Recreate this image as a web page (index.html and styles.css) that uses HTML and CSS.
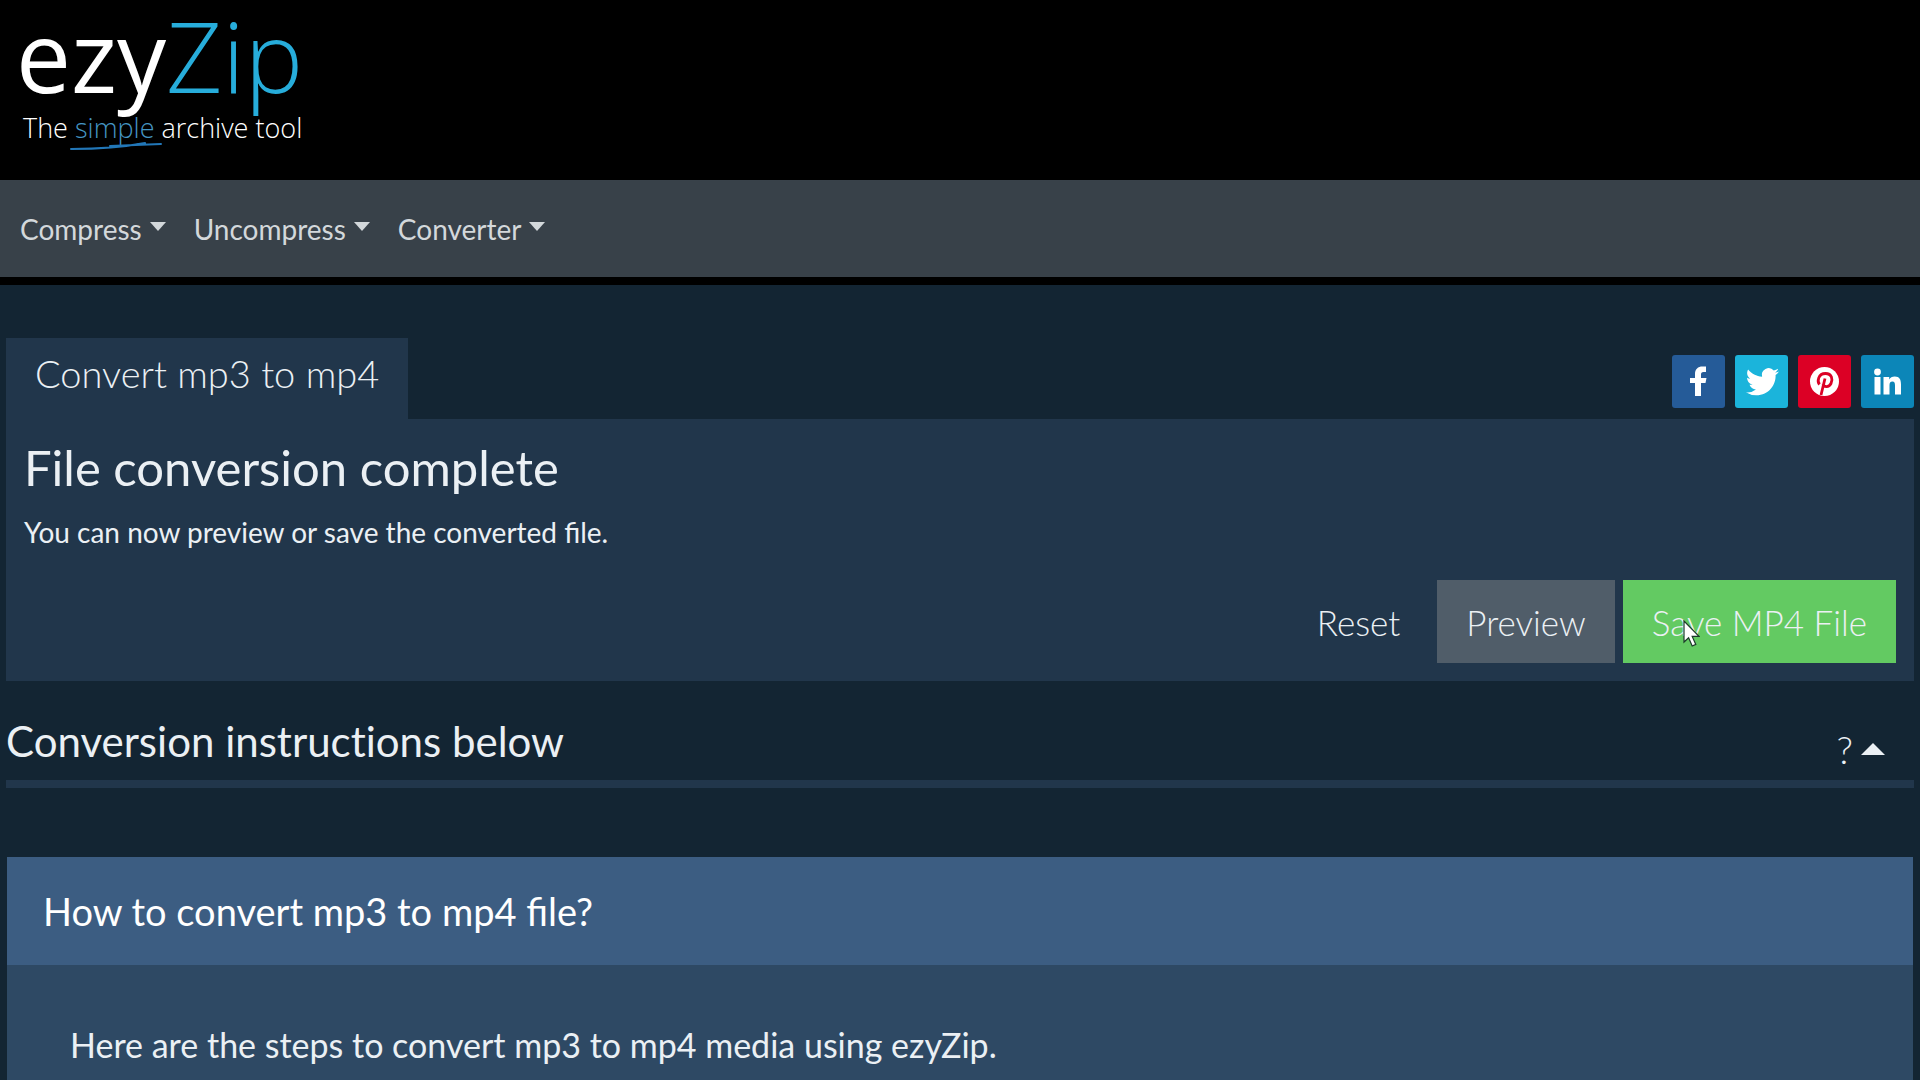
FILE: index.html
```html
<!DOCTYPE html>
<html lang="en">
<head>
<meta charset="utf-8">
<title>Convert mp3 to mp4 - ezyZip</title>
<link rel="stylesheet" href="styles.css">
</head>
<body>
<header class="site-header">
  <a class="logo" href="#">
    <span class="logo-name">ezy<span class="logo-zip">Zip</span></span>
    <span class="logo-tagline">The <span class="logo-simple">simple<svg class="logo-stroke" viewBox="0 0 92 10" aria-hidden="true"><path d="M1 8 C30 8 54 6 75 2 M40 5 L91 3" fill="none" stroke="#2277b8" stroke-width="2" stroke-linecap="round"/></svg></span> archive tool</span>
  </a>
</header>

<nav class="navbar">
  <button class="nav-item" type="button">Compress<span class="caret"></span></button>
  <button class="nav-item" type="button">Uncompress<span class="caret"></span></button>
  <button class="nav-item" type="button">Converter<span class="caret"></span></button>
</nav>

<main class="content">
  <div class="tab-row">
    <a class="tab" href="#">Convert mp3 to mp4</a>
    <div class="social">
      <a class="share facebook" href="#" aria-label="Facebook">
        <svg viewBox="0 0 53 53"><path d="M23 41V28h-5v-5h5v-4c0-5 3-7.500 7.500-7.500H34v5.500h-2.500c-2 0-2.500 1-2.500 2.500V23h5.500l-1 5H29v13z" fill="#fff"/></svg>
      </a>
      <a class="share twitter" href="#" aria-label="Twitter">
        <svg viewBox="0 0 53 53"><path d="M44 16.500c-1.200.5-2.500.9-3.900 1.100 1.400-.8 2.500-2.200 3-3.800-1.300.8-2.800 1.400-4.300 1.700a6.800 6.800 0 0 0-11.700 6.200c-5.700-.3-10.700-3-14-7.100-1.800 3.100-.9 7.100 2.100 9.100-1.100 0-2.200-.3-3.100-.9 0 3.200 2.300 6.200 5.500 6.800-1 .3-2 .3-3.100.1.900 2.700 3.400 4.700 6.400 4.700a13.700 13.700 0 0 1-10.100 2.900A19.400 19.400 0 0 0 21.300 40.300c12.600 0 19.700-10.600 19.300-20.300 1.300-1 2.500-2.100 3.400-3.500z" fill="#fff"/></svg>
      </a>
      <a class="share pinterest" href="#" aria-label="Pinterest">
        <svg viewBox="0 0 53 53"><circle cx="26.500" cy="26.500" r="14.500" fill="#fff"/><path d="M21.500 29.500c-2.500-3-1.500-11 6-11 6.500 0 7.500 6 5.500 10s-7 4-8 .5M27 23.500L23 40" fill="none" stroke="#dc0025" stroke-width="2.800"/></svg>
      </a>
      <a class="share linkedin" href="#" aria-label="LinkedIn">
        <svg viewBox="0 0 53 53"><circle cx="16.500" cy="17" r="3.400" fill="#fff"/><path d="M13.500 22h6v17.500h-6zM22.500 22h5.700v2.500c1-1.700 2.800-3 5.600-3 4.800 0 6.200 3.200 6.200 8v10h-6v-9c0-2.500-.5-4-2.600-4-2.200 0-2.900 1.600-2.900 4v9h-6z" fill="#fff"/></svg>
      </a>
    </div>
  </div>

  <section class="panel">
    <h1 class="panel-title">File conversion complete</h1>
    <p class="panel-text">You can now preview or save the converted file.</p>
    <div class="actions">
      <button class="btn btn-link" type="button">Reset</button>
      <button class="btn btn-grey" type="button">Preview</button>
      <button class="btn btn-green" type="button">Save MP4 File
        <svg class="pointer" viewBox="0 0 17 27" aria-hidden="true"><path d="M1 1v21l4.600-4.300 3.600 8.300 3.600-1.600-3.600-8H16z" fill="#fff" stroke="#1c3a2a" stroke-width="1.200"/></svg>
      </button>
    </div>
  </section>

  <div class="instructions">
    <h2 class="instructions-title">Conversion instructions below</h2>
    <button class="help" type="button" aria-label="Toggle instructions">?<span class="caret-up"></span></button>
  </div>

  <section class="card">
    <h3 class="card-header">How to convert mp3 to mp4 file?</h3>
    <p class="card-body">Here are the steps to convert mp3 to mp4 media using ezyZip.</p>
  </section>
</main>
</body>
</html>
```

FILE: styles.css
```css
* {
  box-sizing: border-box;
}
body {
  margin: 0;
  min-height: 100vh;
  display: flex;
  flex-direction: column;
  font-family: Lato, "Liberation Sans", sans-serif;
  font-size: 28px;
  color: #ebf0f4;
  background-color: #132533;
}
h1, h2, h3, p {
  margin: 0;
  font-weight: 400;
}
a {
  color: inherit;
  text-decoration: none;
}
button {
  border: none;
  padding: 0;
  background: none;
  color: inherit;
  font: inherit;
  cursor: pointer;
}

/* Header */
.site-header {
  height: 180px;
  padding: 7px 16px;
  background-color: #000;
}
.logo {
  display: inline-flex;
  flex-direction: column;
  font-family: "Open Sans", sans-serif;
  color: #fff;
}
.logo-name {
  font-size: 98px;
  line-height: 96px;
}
.logo-zip {
  font-weight: 300;
  color: #27addb;
}
.logo-tagline {
  padding-left: 7px;
  font-size: 27px;
  font-weight: 300;
  line-height: 50px;
}
.logo-simple {
  position: relative;
  color: #4596c4;
}
.logo-stroke {
  position: absolute;
  left: -5px;
  bottom: -5px;
  width: 92px;
  height: 10px;
}

/* Navigation */
.navbar {
  display: flex;
  align-items: center;
  gap: 28px;
  height: 105px;
  padding: 0 20px;
  border-bottom: 8px solid #000;
  background-color: #384149;
  color: #d3d8db;
}
.nav-item {
  display: flex;
  align-items: center;
  gap: 8px;
}
.caret {
  border: 8px solid transparent;
  border-top: 9px solid;
  border-bottom: 5px solid transparent;
}

/* Tab and share buttons */
.content {
  flex: 1;
  display: flex;
  flex-direction: column;
  padding: 53px 6px 0;
}
.tab-row {
  display: flex;
  justify-content: space-between;
  align-items: flex-end;
}
.tab {
  padding: 11px 29px 22px;
  background-color: #21364b;
  font-size: 38px;
  font-weight: 300;
  line-height: 48px;
}
.social {
  display: flex;
  gap: 10px;
  padding-bottom: 11px;
}
.share {
  display: flex;
  width: 53px;
  height: 53px;
  border-radius: 3px;
}
.share svg {
  width: 100%;
}
.facebook {
  background-color: #255b98;
}
.twitter {
  background-color: #1bb4db;
}
.pinterest {
  background-color: #dc0025;
}
.linkedin {
  background-color: #0c86b8;
}

/* Result panel */
.panel {
  padding: 19px 18px 18px;
  background-color: #21364b;
}
.panel-title {
  font-size: 49px;
  line-height: 58px;
}
.panel-text {
  margin: 16px 0 28px;
  line-height: 40px;
}
.actions {
  display: flex;
  justify-content: flex-end;
  gap: 8px;
}
.btn {
  position: relative;
  height: 83px;
  padding: 0 29px;
  font-size: 35px;
  font-weight: 300;
}
.btn-grey {
  background-color: #505d69;
}
.btn-green {
  background-color: #63ca62;
}
.pointer {
  position: absolute;
  left: 60px;
  top: 40px;
  width: 17px;
  height: 27px;
}

/* Instructions */
.instructions {
  display: flex;
  justify-content: space-between;
  align-items: center;
  margin: 34px 0 69px;
  padding-bottom: 13px;
  border-bottom: 8px solid #21364b;
}
.instructions-title {
  font-size: 42px;
  line-height: 52px;
  font-variant-ligatures: no-common-ligatures;
}
.help {
  display: flex;
  align-items: center;
  gap: 8px;
  padding: 16px 29px 0 0;
  font-size: 38px;
  font-weight: 300;
  line-height: 36px;
}
.caret-up {
  border: 12px solid transparent;
  border-top: 0;
  border-bottom: 12px solid;
}

/* How-to card */
.card {
  flex: 1;
  margin: 0 1px;
  background-color: #2e4964;
}
.card-header {
  padding: 0 36px;
  background-color: #3c5d82;
  font-size: 38px;
  line-height: 108px;
  color: #fff;
}
.card-body {
  padding: 56px 63px 11px;
  font-size: 34px;
  line-height: 48px;
}
```
